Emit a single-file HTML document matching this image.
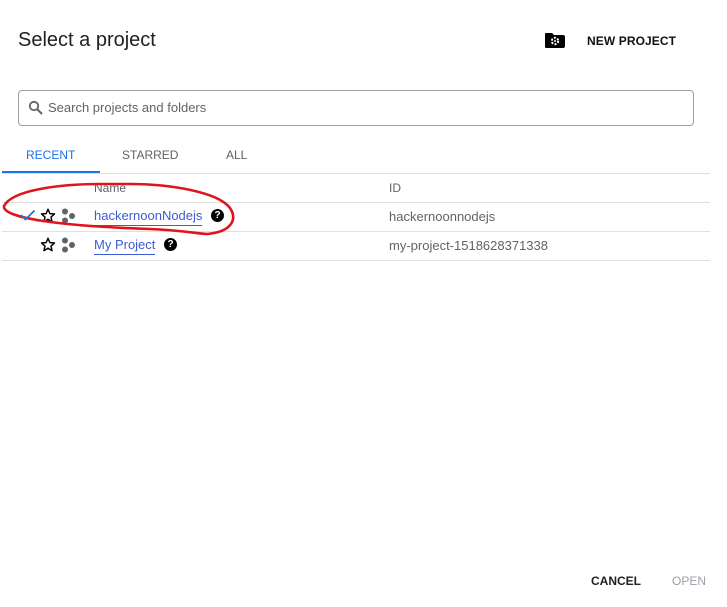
<!DOCTYPE html>
<html><head><style>
body{margin:0;width:727px;height:607px;background:#fff;font-family:"Liberation Sans",Arial,sans-serif;position:relative;overflow:hidden;color:#202124}
.a{position:absolute;white-space:nowrap}
.line{position:absolute;left:2px;width:708px;height:1px;background:#e0e0e0}
.lnk{color:#3c5bd6;border-bottom:1px solid #3c5bd6;font-size:13px;padding-bottom:2px}
.q{position:absolute;width:13px;height:13px;border-radius:50%;background:#000;color:#fff;font-size:10px;font-weight:bold;text-align:center;line-height:13px}
</style></head><body>
<div class="a" style="left:18px;top:29px;font-size:20px;">Select a project</div>
<svg class="a" style="left:544px;top:31px" width="22" height="18" viewBox="0 0 22 18"><path d="M2 2h6l2 2h9a2 2 0 0 1 2 2v9a2 2 0 0 1-2 2H2a1 1 0 0 1-1-1V3a1 1 0 0 1 1-1z" fill="#000"/><circle cx="11" cy="10" r="3.2" fill="none" stroke="#fff" stroke-width="2" stroke-dasharray="2 1.4"/><circle cx="11" cy="10" r="1" fill="#fff"/></svg>
<div class="a" style="left:587px;top:34px;font-size:12px;font-weight:bold;color:#111;letter-spacing:0.1px">NEW PROJECT</div>
<div class="a" style="left:18px;top:90px;width:674px;height:34px;border:1px solid #9aa0a6;border-radius:4px"></div>
<svg class="a" style="left:28px;top:100px" width="16" height="16" viewBox="0 0 16 16"><circle cx="6" cy="6" r="4.2" fill="none" stroke="#5f6368" stroke-width="1.8"/><path d="M9 9l5 5" stroke="#5f6368" stroke-width="2"/></svg>
<div class="a" style="left:48px;top:100px;font-size:13px;color:#5f6368">Search projects and folders</div>
<div class="a" style="left:26px;top:148px;font-size:12px;color:#1a73e8">RECENT</div>
<div class="a" style="left:122px;top:148px;font-size:12px;color:#5f6368">STARRED</div>
<div class="a" style="left:226px;top:148px;font-size:12px;color:#5f6368">ALL</div>
<div class="a" style="left:2px;top:171px;width:98px;height:3px;background:#1a73e8"></div>
<div class="line" style="top:173px"></div>
<div class="a" style="left:94px;top:181px;font-size:12px;color:#5f6368">Name</div>
<div class="a" style="left:389px;top:181px;font-size:12px;color:#5f6368">ID</div>
<div class="line" style="top:202px"></div>
<svg class="a" style="left:40px;top:208px" width="16" height="15" viewBox="0 0 24 23"><path d="M12 2l2.9 6.6 7.1.6-5.4 4.7 1.6 7L12 17.2 5.8 20.9l1.6-7L2 9.2l7.1-.6z" fill="none" stroke="#000" stroke-width="2.2" stroke-linejoin="round"/></svg>
<svg class="a" style="left:61px;top:208px" width="16" height="16"><circle cx="4" cy="3.5" r="3" fill="#5f6368"/><circle cx="11" cy="8" r="3" fill="#5f6368"/><circle cx="4" cy="12.5" r="3" fill="#5f6368"/></svg>
<div class="a lnk" style="left:94px;top:208px">hackernoonNodejs</div>
<div class="q" style="left:211px;top:209px">?</div>
<div class="a" style="left:389px;top:209px;font-size:13px;color:#5f6368">hackernoonnodejs</div>
<div class="line" style="top:231px"></div>
<svg class="a" style="left:40px;top:237px" width="16" height="15" viewBox="0 0 24 23"><path d="M12 2l2.9 6.6 7.1.6-5.4 4.7 1.6 7L12 17.2 5.8 20.9l1.6-7L2 9.2l7.1-.6z" fill="none" stroke="#000" stroke-width="2.2" stroke-linejoin="round"/></svg>
<svg class="a" style="left:61px;top:237px" width="16" height="16"><circle cx="4" cy="3.5" r="3" fill="#5f6368"/><circle cx="11" cy="8" r="3" fill="#5f6368"/><circle cx="4" cy="12.5" r="3" fill="#5f6368"/></svg>
<div class="a lnk" style="left:94px;top:237px">My Project</div>
<div class="q" style="left:164px;top:238px">?</div>
<div class="a" style="left:389px;top:238px;font-size:13px;color:#5f6368">my-project-1518628371338</div>
<div class="line" style="top:260px"></div>
<svg class="a" style="left:0;top:178px" width="245" height="62"><path d="M100 6 C60 6 12 12 4 28 C2 40 60 48 150 51 C180 52 200 56 208 56 L214 55 C230 52 238 42 230 30 C218 14 170 6 130 6 C115 6 105 6 100 6" fill="none" stroke="#e0141b" stroke-width="2.6" stroke-linecap="round"/></svg>
<svg class="a" style="left:19px;top:208px" width="18" height="14"><path d="M2 7l4.5 4.5 9-9" fill="none" stroke="#1a73e8" stroke-width="1.8"/></svg>
<div class="a" style="left:591px;top:574px;font-size:12px;font-weight:bold;color:#202124">CANCEL</div>
<div class="a" style="left:672px;top:574px;font-size:12px;color:#9aa0a6">OPEN</div>
</body></html>
